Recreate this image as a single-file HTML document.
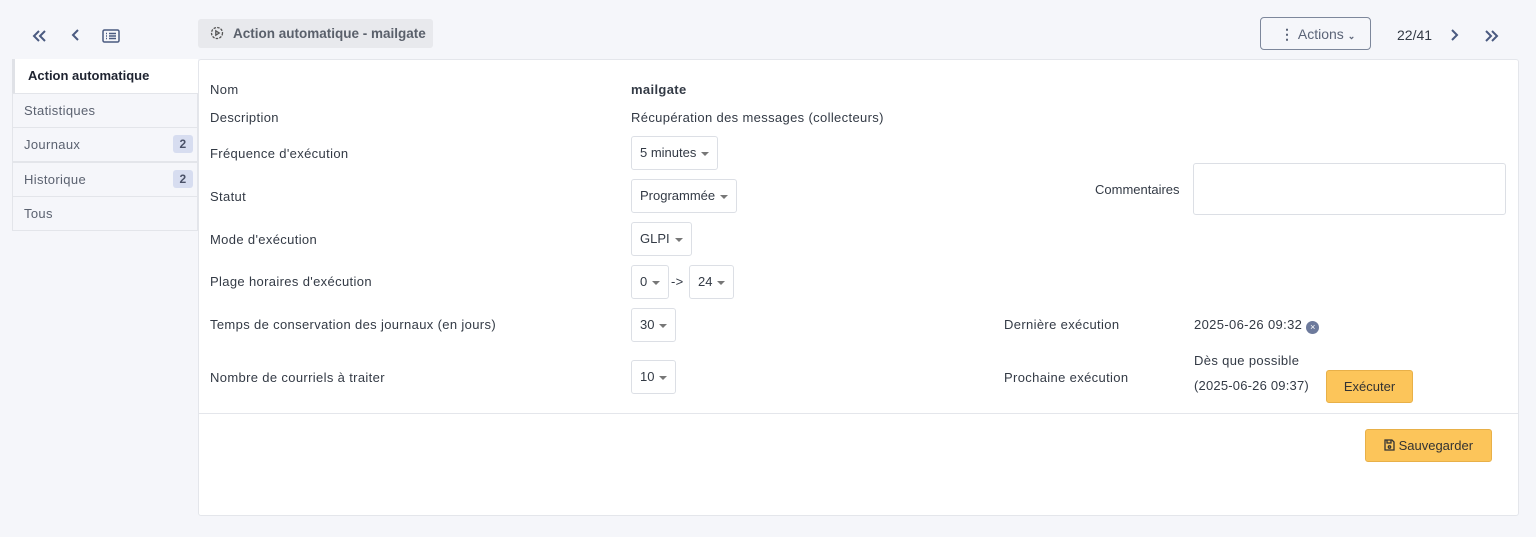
<!DOCTYPE html>
<html><head><meta charset="utf-8"><style>
*{box-sizing:border-box;margin:0;padding:0}
body{width:1536px;height:537px;background:#f5f6fa;font-family:"Liberation Sans",Arial,sans-serif;font-size:13px;letter-spacing:0.35px;color:#333a45;position:relative;overflow:hidden}
.a{position:absolute;white-space:nowrap}
.sel{position:absolute;height:34px;border:1px solid #dcdfe5;border-radius:3px;background:#fff;padding:0 8px;line-height:32px;font-size:13px;letter-spacing:0}
.sel:after{content:"";display:inline-block;margin-left:5px;border-left:4px solid transparent;border-right:4px solid transparent;border-top:4px solid #777;vertical-align:middle}
.tab{position:absolute;left:12px;width:186px;height:35px;border:1px solid #e3e5ea;background:#f5f6fa;color:#5b6270;padding-left:11px;line-height:33px}
.badge{position:absolute;right:4px;top:7px;width:20px;height:18px;background:#d7ddf0;border-radius:3px;text-align:center;line-height:18px;font-size:12px;font-weight:bold;color:#4a5168}
.btn{position:absolute;background:#fcc55a;border:1px solid #e8b048;border-radius:3px;text-align:center;color:#333;letter-spacing:0}
</style></head><body>
<svg class="a" style="left:31px;top:29px" width="16" height="14" viewBox="0 0 16 14" fill="none" stroke="#4a5a80" stroke-width="2"><path d="M8 2L3 7l5 5M14 2L9 7l5 5"/></svg>
<svg class="a" style="left:71px;top:28px" width="10" height="14" viewBox="0 0 10 14" fill="none" stroke="#4a5a80" stroke-width="2"><path d="M7 2L2 7l5 5"/></svg>
<svg class="a" style="left:102px;top:29px" width="18" height="14" viewBox="0 0 18 14" fill="none" stroke="#4a5a80" stroke-width="1.5"><rect x="1" y="1" width="16" height="12" rx="1.5"/><path d="M4 4.5h1M7 4.5h7M4 7h1M7 7h7M4 9.5h1M7 9.5h7"/></svg>
<div class="a" style="left:198px;top:19px;width:235px;height:29px;background:#e8e9ed;border-radius:3px"></div>
<svg class="a" style="left:210px;top:26px" width="14" height="14" viewBox="0 0 14 14" fill="none" stroke="#555" stroke-width="1.3"><circle cx="7" cy="7" r="5.5" stroke-dasharray="2.5 1.2"/><path d="M5.8 4.8v4.4L9.2 7z"/></svg>
<div class="a" style="left:233px;top:26px;font-size:13.5px;letter-spacing:0;font-weight:bold;color:#5a606b">Action automatique - mailgate</div>
<div class="a" style="left:1260px;top:17px;width:111px;height:33px;border:1px solid #7d879b;border-radius:4px"></div>
<div class="a" style="left:1280px;top:26px;font-size:14px;letter-spacing:0;color:#5b6478;font-weight:bold">⋮ <span style="font-weight:normal">Actions</span> <span style="font-size:9px">⌄</span></div>
<div class="a" style="left:1397px;top:27px;font-size:14px;letter-spacing:0">22/41</div>
<svg class="a" style="left:1449px;top:28px" width="10" height="14" viewBox="0 0 10 14" fill="none" stroke="#4a5a80" stroke-width="2"><path d="M3 2l5 5-5 5"/></svg>
<svg class="a" style="left:1484px;top:29px" width="16" height="14" viewBox="0 0 16 14" fill="none" stroke="#4a5a80" stroke-width="2"><path d="M2 2l5 5-5 5M8 2l5 5-5 5"/></svg>

<div class="a" style="left:198px;top:59px;width:1321px;height:457px;background:#fff;border:1px solid #e4e6eb;border-radius:3px"></div>
<div class="a" style="left:12px;top:59px;width:186px;height:34px;background:#fff;border-left:3px solid #e0e2e7;padding-left:13px;line-height:34px;font-weight:bold;letter-spacing:0;color:#1e2330">Action automatique</div>
<div class="tab" style="top:93px">Statistiques</div>
<div class="tab" style="top:127px">Journaux<span class="badge">2</span></div>
<div class="tab" style="top:162px">Historique<span class="badge">2</span></div>
<div class="tab" style="top:196px">Tous</div>

<div class="a" style="left:210px;top:82px">Nom</div>
<div class="a" style="left:631px;top:82px;font-weight:bold">mailgate</div>
<div class="a" style="left:210px;top:110px">Description</div>
<div class="a" style="left:631px;top:110px">Récupération des messages (collecteurs)</div>
<div class="a" style="left:210px;top:146px">Fréquence d'exécution</div>
<div class="sel" style="left:631px;top:136px">5 minutes</div>
<div class="a" style="left:210px;top:189px">Statut</div>
<div class="sel" style="left:631px;top:179px">Programmée</div>
<div class="a" style="left:1095px;top:182px;letter-spacing:0">Commentaires</div>
<div class="a" style="left:1193px;top:163px;width:313px;height:52px;border:1px solid #dcdfe5;border-radius:3px"></div>
<div class="a" style="left:210px;top:232px">Mode d'exécution</div>
<div class="sel" style="left:631px;top:222px">GLPI</div>
<div class="a" style="left:210px;top:274px">Plage horaires d'exécution</div>
<div class="sel" style="left:631px;top:265px">0</div>
<div class="a" style="left:671px;top:274px">-&gt;</div>
<div class="sel" style="left:689px;top:265px">24</div>
<div class="a" style="left:210px;top:317px">Temps de conservation des journaux (en jours)</div>
<div class="sel" style="left:631px;top:308px">30</div>
<div class="a" style="left:1004px;top:317px">Dernière exécution</div>
<div class="a" style="left:1194px;top:317px">2025-06-26 09:32 <span style="display:inline-block;width:13px;height:13px;border-radius:50%;background:#6d7a9c;color:#fff;font-size:9px;letter-spacing:0;text-align:center;line-height:13px;vertical-align:-1px">×</span></div>
<div class="a" style="left:210px;top:370px">Nombre de courriels à traiter</div>
<div class="sel" style="left:631px;top:360px">10</div>
<div class="a" style="left:1004px;top:370px">Prochaine exécution</div>
<div class="a" style="left:1194px;top:353px">Dès que possible</div>
<div class="a" style="left:1194px;top:378px;letter-spacing:0.2px">(2025-06-26 09:37)</div>
<div class="btn" style="left:1326px;top:370px;width:87px;height:33px;line-height:31px">Exécuter</div>
<div class="a" style="left:199px;top:413px;width:1319px;height:1px;background:#e4e6eb"></div>
<div class="btn" style="left:1365px;top:429px;width:127px;height:33px;line-height:31px"><svg width="11" height="12" viewBox="0 0 11 12" fill="none" stroke="#333" stroke-width="1.3" style="vertical-align:-1px"><path d="M1 1h7l2 2v8H1z"/><path d="M3 1v3h4V1"/><circle cx="5.5" cy="8" r="1.2"/></svg> Sauvegarder</div>
</body></html>
